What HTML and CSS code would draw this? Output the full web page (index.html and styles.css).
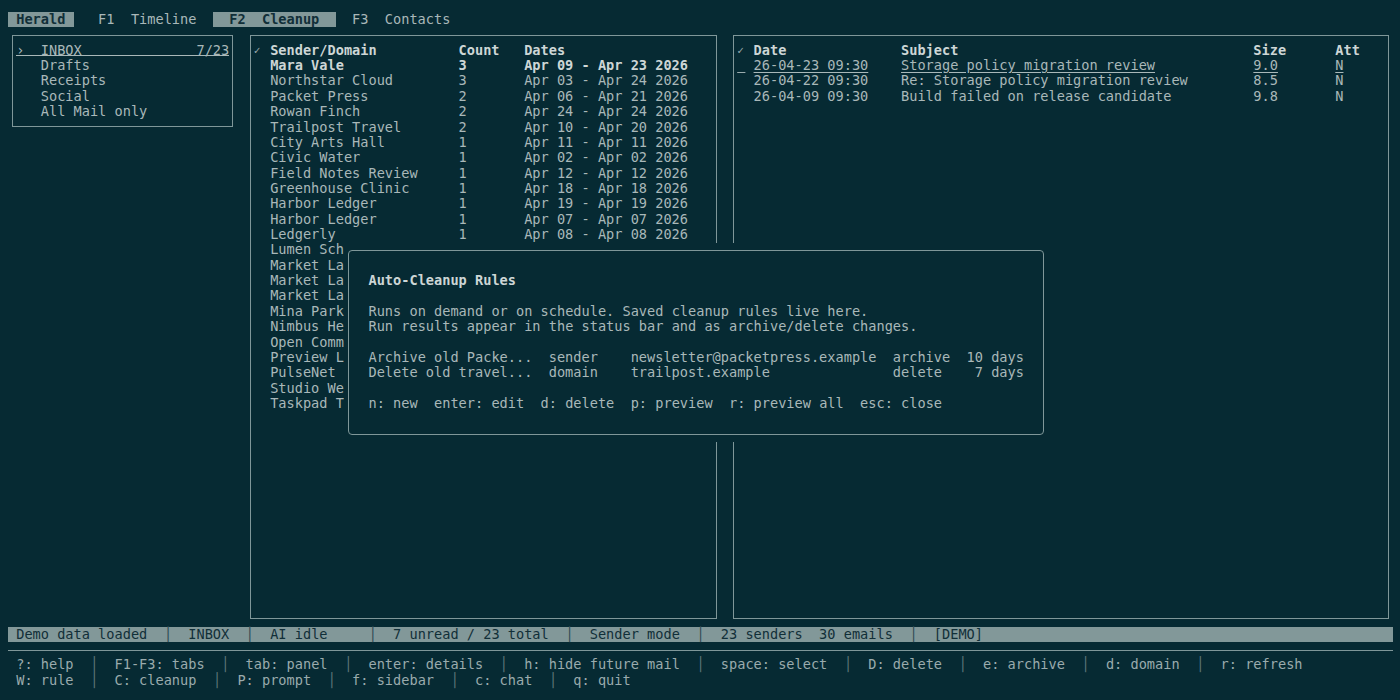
FILE: index.html
```html
<!DOCTYPE html>
<html lang="en">
<head>
    <meta charset="UTF-8">
    <meta name="viewport" content="width=device-width, initial-scale=1.0">
    <title>Herald - Cleanup</title>
    <link rel="stylesheet" href="styles.css">
</head>
<body>
<div class="screen">
    <div class="tabs">
        <span class="tab brand">Herald</span>
        <span class="tab"><span class="fkey">F1</span>Timeline</span>
        <span class="tab active"><span class="fkey">F2</span>Cleanup</span>
        <span class="tab"><span class="fkey">F3</span>Contacts</span>
    </div>

    <div class="panes">
        <div class="box sidebar">
            <div class="folder current"><span class="cursor">›</span><span class="fname">INBOX</span><span class="fcount">7/23</span></div>
            <div class="folder"><span class="cursor"></span><span class="fname">Drafts</span></div>
            <div class="folder"><span class="cursor"></span><span class="fname">Receipts</span></div>
            <div class="folder"><span class="cursor"></span><span class="fname">Social</span></div>
            <div class="folder"><span class="cursor"></span><span class="fname">All Mail only</span></div>
        </div>

        <div class="box senders">
            <div class="row head"><span class="check">✓</span><span>Sender/Domain</span><span>Count</span><span>Dates</span></div>
            <div class="row selected"><span class="check"></span><span>Mara Vale</span><span>3</span><span>Apr 09 - Apr 23 2026</span></div>
            <div class="row"><span class="check"></span><span>Northstar Cloud</span><span>3</span><span>Apr 03 - Apr 24 2026</span></div>
            <div class="row"><span class="check"></span><span>Packet Press</span><span>2</span><span>Apr 06 - Apr 21 2026</span></div>
            <div class="row"><span class="check"></span><span>Rowan Finch</span><span>2</span><span>Apr 24 - Apr 24 2026</span></div>
            <div class="row"><span class="check"></span><span>Trailpost Travel</span><span>2</span><span>Apr 10 - Apr 20 2026</span></div>
            <div class="row"><span class="check"></span><span>City Arts Hall</span><span>1</span><span>Apr 11 - Apr 11 2026</span></div>
            <div class="row"><span class="check"></span><span>Civic Water</span><span>1</span><span>Apr 02 - Apr 02 2026</span></div>
            <div class="row"><span class="check"></span><span>Field Notes Review</span><span>1</span><span>Apr 12 - Apr 12 2026</span></div>
            <div class="row"><span class="check"></span><span>Greenhouse Clinic</span><span>1</span><span>Apr 18 - Apr 18 2026</span></div>
            <div class="row"><span class="check"></span><span>Harbor Ledger</span><span>1</span><span>Apr 19 - Apr 19 2026</span></div>
            <div class="row"><span class="check"></span><span>Harbor Ledger</span><span>1</span><span>Apr 07 - Apr 07 2026</span></div>
            <div class="row"><span class="check"></span><span>Ledgerly</span><span>1</span><span>Apr 08 - Apr 08 2026</span></div>
            <div class="row"><span class="check"></span><span>Lumen Schoolhouse</span><span>1</span><span>Apr 15 - Apr 15 2026</span></div>
            <div class="row"><span class="check"></span><span>Market Lane Deals</span><span>1</span><span>Apr 05 - Apr 05 2026</span></div>
            <div class="row"><span class="check"></span><span>Market Lane Deals</span><span>1</span><span>Apr 13 - Apr 13 2026</span></div>
            <div class="row"><span class="check"></span><span>Market Lane Weekly</span><span>1</span><span>Apr 16 - Apr 16 2026</span></div>
            <div class="row"><span class="check"></span><span>Mina Park</span><span>1</span><span>Apr 22 - Apr 22 2026</span></div>
            <div class="row"><span class="check"></span><span>Nimbus Health</span><span>1</span><span>Apr 14 - Apr 14 2026</span></div>
            <div class="row"><span class="check"></span><span>Open Commons</span><span>1</span><span>Apr 17 - Apr 17 2026</span></div>
            <div class="row"><span class="check"></span><span>Preview Labs</span><span>1</span><span>Apr 25 - Apr 25 2026</span></div>
            <div class="row"><span class="check"></span><span>PulseNet</span><span>1</span><span>Apr 01 - Apr 01 2026</span></div>
            <div class="row"><span class="check"></span><span>Studio Weave</span><span>1</span><span>Apr 20 - Apr 20 2026</span></div>
            <div class="row"><span class="check"></span><span>Taskpad Team</span><span>1</span><span>Apr 21 - Apr 21 2026</span></div>
        </div>

        <div class="box messages">
            <div class="row head"><span class="check">✓</span><span>Date</span><span>Subject</span><span>Size</span><span>Att</span></div>
            <div class="row cursor-row"><span class="check"> </span><span>26-04-23 09:30</span><span>Storage policy migration review</span><span>9.0</span><span>N</span></div>
            <div class="row"><span class="check"></span><span>26-04-22 09:30</span><span>Re: Storage policy migration review</span><span>8.5</span><span>N</span></div>
            <div class="row"><span class="check"></span><span>26-04-09 09:30</span><span>Build failed on release candidate</span><span>9.8</span><span>N</span></div>
        </div>
    </div>

    <div class="status">
        <span class="seg first">Demo data loaded</span><span class="sep">│</span>
        <span class="seg">INBOX</span><span class="sep">│</span>
        <span class="seg wide">AI idle</span><span class="sep">│</span>
        <span class="seg">7 unread / 23 total</span><span class="sep">│</span>
        <span class="seg">Sender mode</span><span class="sep">│</span>
        <span class="seg">23 senders  30 emails</span><span class="sep">│</span>
        <span class="seg">[DEMO]</span>
    </div>

    <div class="rule"></div>

    <div class="keys">
        <span>?: help</span><span class="sep">│</span>
        <span>F1-F3: tabs</span><span class="sep">│</span>
        <span>tab: panel</span><span class="sep">│</span>
        <span>enter: details</span><span class="sep">│</span>
        <span>h: hide future mail</span><span class="sep">│</span>
        <span>space: select</span><span class="sep">│</span>
        <span>D: delete</span><span class="sep">│</span>
        <span>e: archive</span><span class="sep">│</span>
        <span>d: domain</span><span class="sep">│</span>
        <span>r: refresh</span>
    </div>
    <div class="keys">
        <span>W: rule</span><span class="sep">│</span>
        <span>C: cleanup</span><span class="sep">│</span>
        <span>P: prompt</span><span class="sep">│</span>
        <span>f: sidebar</span><span class="sep">│</span>
        <span>c: chat</span><span class="sep">│</span>
        <span>q: quit</span>
    </div>

    <div class="modal">
        <div class="modal-frame">
            <div class="modal-title">Auto-Cleanup Rules</div>
            <div class="modal-text">
                <div>Runs on demand or on schedule. Saved cleanup rules live here.</div>
                <div>Run results appear in the status bar and as archive/delete changes.</div>
            </div>
            <div class="rules">
                <div class="rule-row"><span>Archive old Packe...</span><span>sender</span><span>newsletter@packetpress.example</span><span>archive</span><span class="days">10 days</span></div>
                <div class="rule-row"><span>Delete old travel...</span><span>domain</span><span>trailpost.example</span><span>delete</span><span class="days">7 days</span></div>
            </div>
            <div class="modal-keys">n: new  enter: edit  d: delete  p: preview  r: preview all  esc: close</div>
        </div>
    </div>
</div>
</body>
</html>
```

FILE: styles.css
```css
:root {
    --lh: 15.37px;
    --bg: #062a33;
    --fg: #a9b8b9;
    --bright: #cdd6d6;
    --dim: #9aabad;
    --line: #7f9799;
    --bar: #829899;
    --bar-fg: #112f38;
}
html, body {
    margin: 0;
    background: var(--bg);
}
body {
    font-family: "DejaVu Sans Mono", "Liberation Mono", monospace;
    font-size: 13.62px;
    line-height: var(--lh);
    color: var(--fg);
    padding: 12px 8px 0;
    height: 700px;
    box-sizing: border-box;
    overflow: hidden;
}
.screen {
    position: relative;
    width: 169ch;
}
.tabs span,
.box span,
.status span,
.keys span,
.modal span,
.modal-title,
.modal-text div,
.modal-keys {
    white-space: pre;
}

/* tab strip */
.tabs {
    display: flex;
    height: var(--lh);
}
.tab {
    padding: 0 2ch;
}
.tab .fkey {
    margin-right: 2ch;
}
.tab.brand {
    padding: 0 1ch;
    margin-right: 1ch;
    background: var(--bar);
    color: var(--bar-fg);
    font-weight: bold;
}
.tab.active {
    background: var(--bar);
    color: var(--bar-fg);
    font-weight: bold;
}

/* panes */
.panes {
    display: flex;
    align-items: flex-start;
    height: calc(var(--lh) * 39);
}
.box {
    box-sizing: border-box;
    border: 1px solid var(--line);
    margin-top: calc(var(--lh) / 2);
    padding: calc(var(--lh) / 2 - 1px) calc(0.5ch - 1px);
    overflow: hidden;
}
.sidebar {
    width: 27ch;
    height: calc(var(--lh) * 6);
    margin-left: 0.5ch;
}
.senders {
    width: 57ch;
    height: calc(var(--lh) * 38);
    margin-left: 2ch;
}
.messages {
    width: 80ch;
    height: calc(var(--lh) * 38);
    margin-left: 2ch;
}

.folder {
    display: flex;
    height: var(--lh);
}
.folder .cursor {
    width: 3ch;
}
.folder .fname {
    flex: 1;
}
.folder.current {
    background: linear-gradient(var(--fg), var(--fg)) no-repeat 0 calc(100% - 2px) / 100% 1px;
}

.row {
    display: grid;
    height: var(--lh);
}
.senders .row {
    grid-template-columns: 2ch 23ch 8ch 1fr;
}
.messages .row {
    grid-template-columns: 2ch 18ch 43ch 10ch 1fr;
}
.row .check {
    font-size: 11px;
    color: var(--dim);
}
.row.head,
.row.selected {
    font-weight: bold;
    color: var(--bright);
}
.row.cursor-row span {
    text-decoration: underline;
    text-underline-offset: 2px;
}
.row.cursor-row .check {
    font-size: inherit;
    width: 1ch;
}

/* status bar */
.status {
    display: flex;
    height: var(--lh);
    background: var(--bar);
    color: var(--bar-fg);
}
.status .seg {
    padding: 0 2ch;
}
.status .seg.first {
    padding-left: 1ch;
}
.status .seg.wide {
    padding-right: 5ch;
}
.status .sep {
    color: #2c4a52;
}

.rule {
    border-top: 1px solid var(--line);
    margin-top: calc(var(--lh) / 2);
    margin-bottom: calc(var(--lh) / 2 - 1px);
}

.keys {
    display: flex;
    height: var(--lh);
    padding-left: 1ch;
    color: var(--dim);
}
.keys .sep {
    margin: 0 2ch;
    color: #5f767a;
}

/* cleanup rules dialog: covers whole cells, frame drawn mid-cell */
.modal {
    position: absolute;
    top: calc(var(--lh) * 15);
    left: 41ch;
    width: 86ch;
    height: calc(var(--lh) * 13);
    box-sizing: border-box;
    padding: calc(var(--lh) / 2) 0.5ch;
    background: var(--bg);
}
.modal-frame {
    height: 100%;
    box-sizing: border-box;
    border: 1px solid var(--line);
    border-radius: 4px;
    padding: calc(var(--lh) * 1.5 - 1px) calc(2.5ch - 1px) 0;
}
.modal-title {
    font-weight: bold;
    color: var(--bright);
    margin-bottom: var(--lh);
}
.modal-text {
    margin-bottom: var(--lh);
}
.rules {
    margin-bottom: var(--lh);
}
.rule-row {
    display: grid;
    grid-template-columns: 22ch 10ch 32ch 9ch 7ch;
}
.rule-row .days {
    text-align: right;
}
```
